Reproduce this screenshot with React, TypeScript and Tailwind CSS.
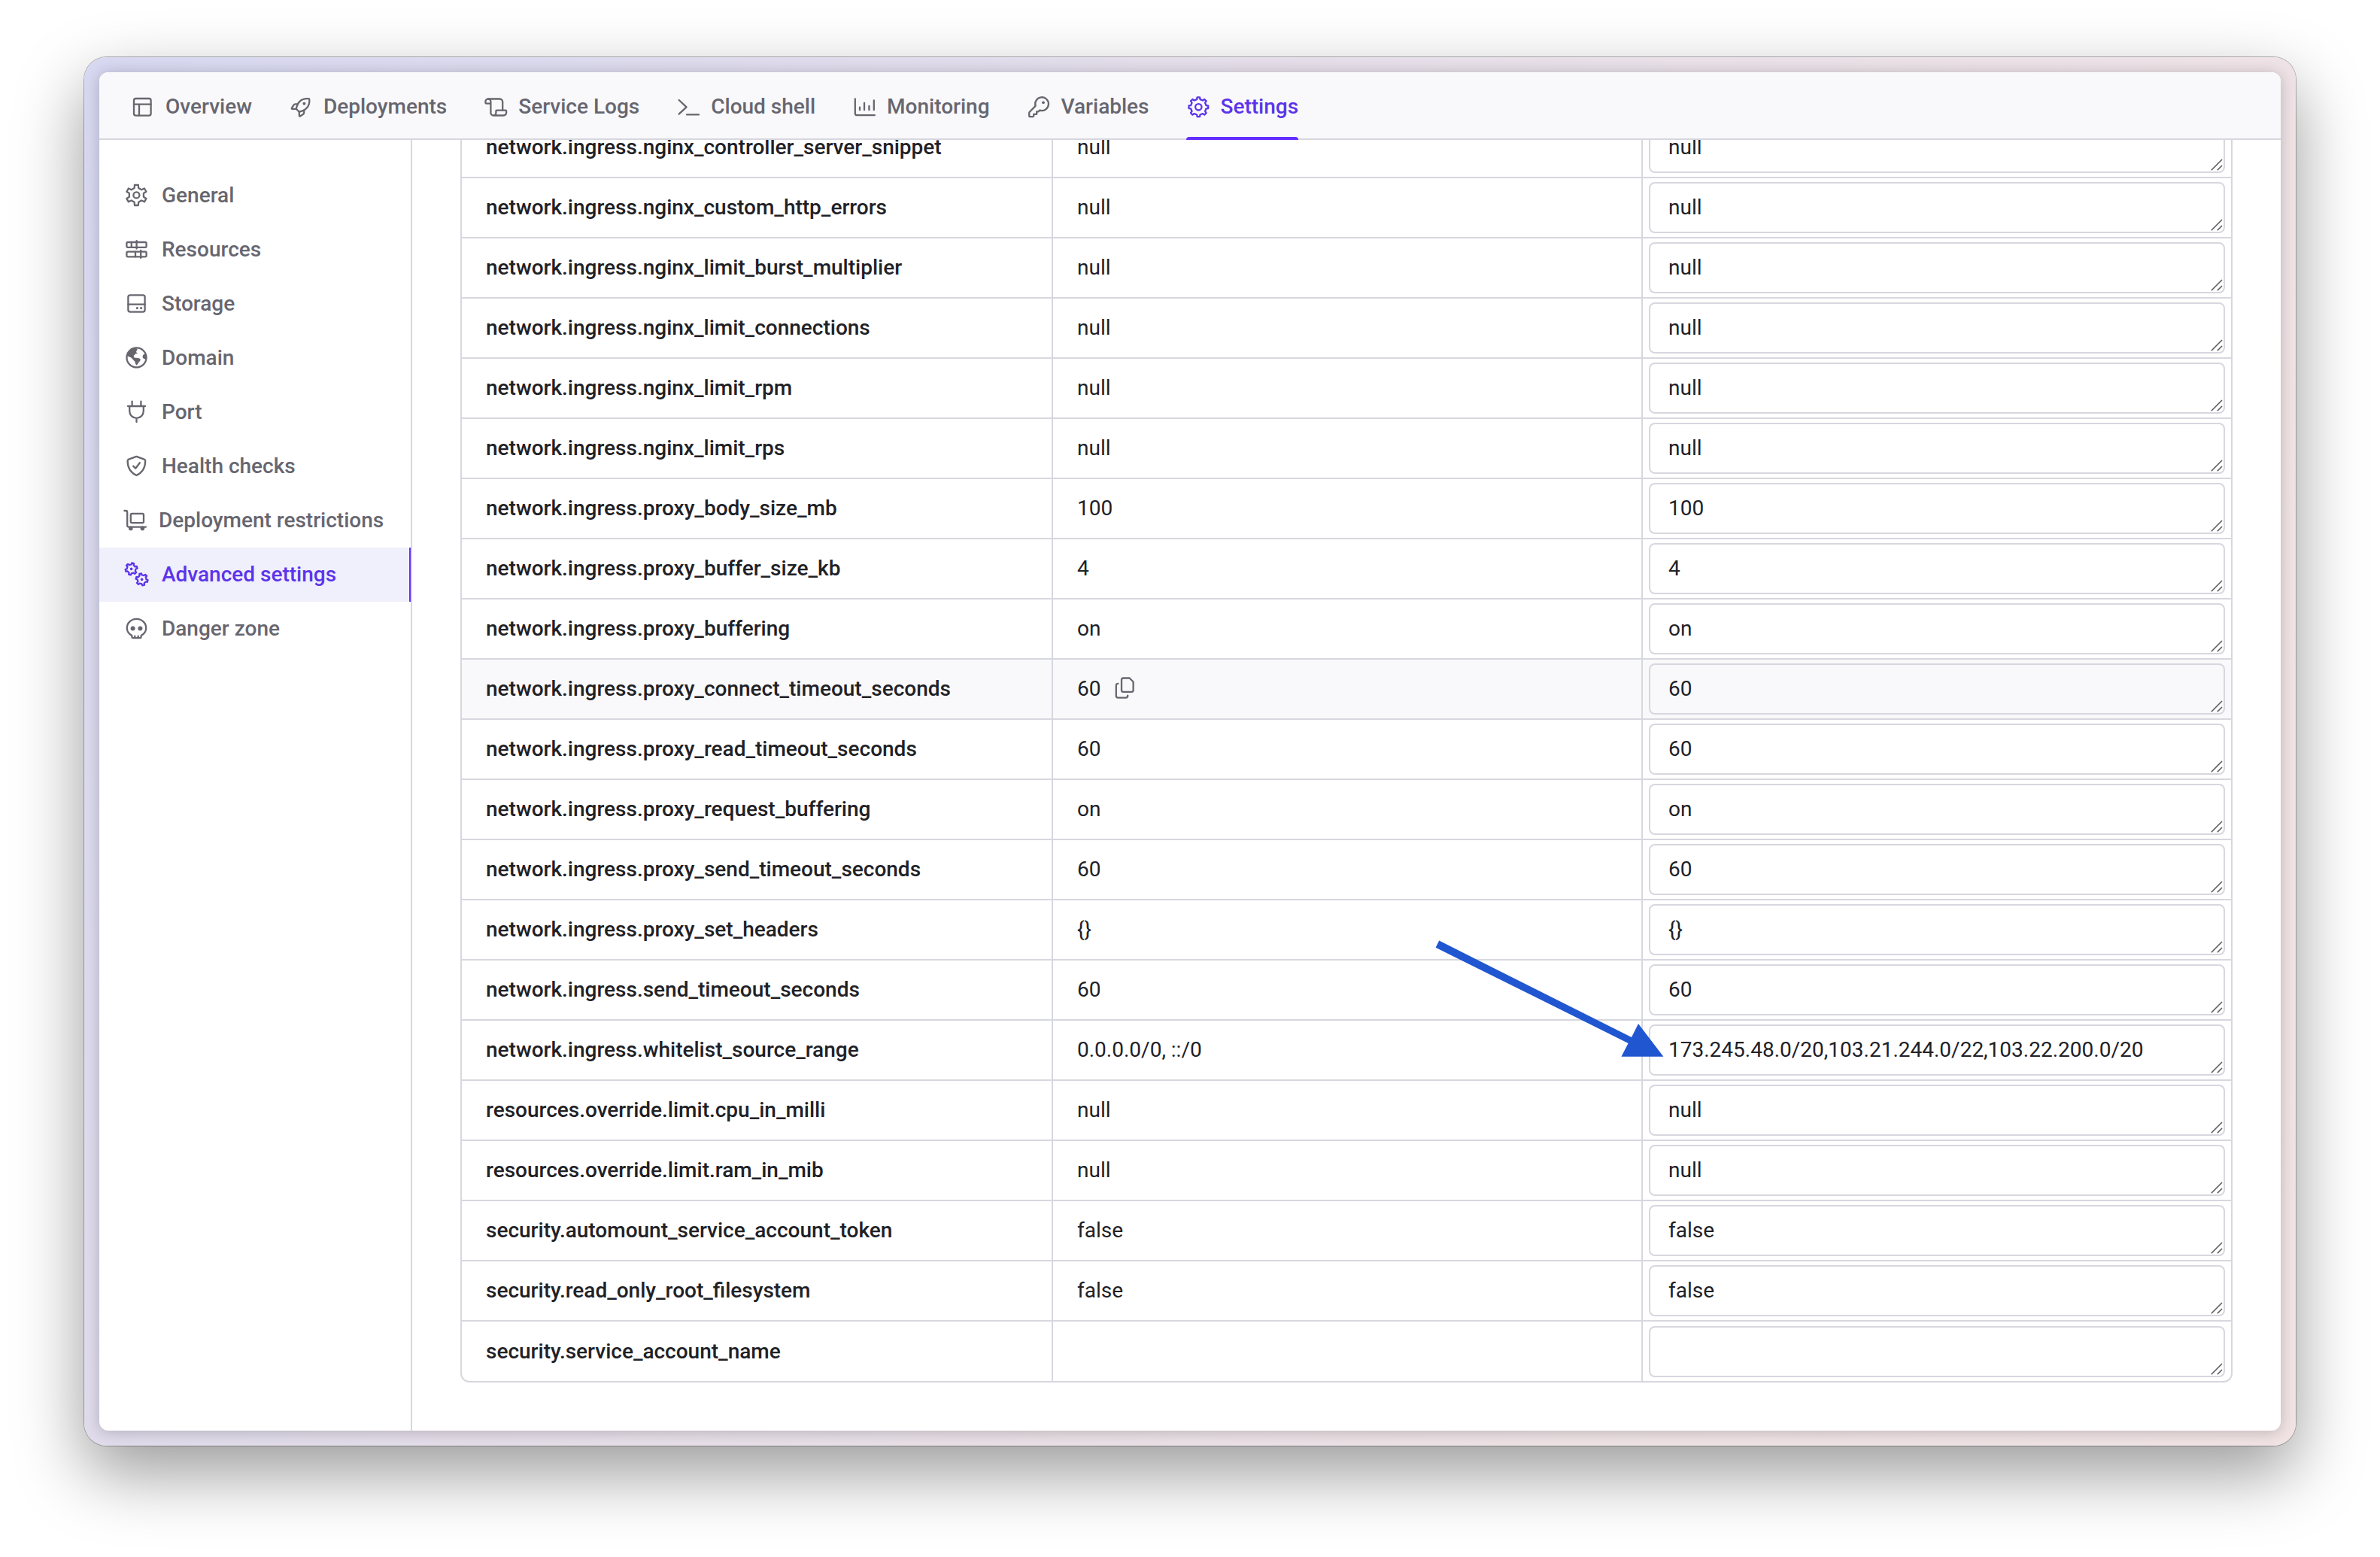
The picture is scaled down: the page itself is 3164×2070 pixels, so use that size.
import { memo, type ReactNode } from "react";
import clsx from "clsx";

/* ================= ICONS ================= */

// closed gear outline with flat teeth, the first tooth pointing at `turn` degrees
function gearPath(cx: number, cy: number, teeth: number, outer: number, inner: number, turn = -90) {
  const step = 360 / teeth;
  const points: string[] = [];
  for (let i = 0; i < teeth; i++) {
    const mid = turn + i * step;
    const corners = [
      [-0.27, inner],
      [-0.17, outer],
      [0.17, outer],
      [0.27, inner],
    ];
    for (const [offset, radius] of corners) {
      const angle = ((mid + offset * step) * Math.PI) / 180;
      points.push(`${(cx + radius * Math.cos(angle)).toFixed(2)} ${(cy + radius * Math.sin(angle)).toFixed(2)}`);
    }
  }
  return `M${points.join("L")}Z`;
}

function Icon({ children }: { children: ReactNode }) {
  return (
    <svg
      viewBox="0 0 32 32"
      className="size-8 shrink-0 overflow-visible"
      fill="none"
      stroke="currentColor"
      strokeWidth="2.3"
      strokeLinecap="round"
      strokeLinejoin="round"
      aria-hidden
    >
      {children}
    </svg>
  );
}

const LayoutIcon = () => (
  <Icon>
    <rect x="4" y="5" width="22.6" height="22.6" rx="2.6" />
    <path d="M4 12.6H26.6M11 12.6V27.6" />
  </Icon>
);

const RocketIcon = () => (
  <Icon>
    <path d="M9.8 18.7C11.4 10.6 16.4 4.4 26.2 5.2C27 5.2 27.3 5.6 27.3 6.3C28 15.8 21.8 21.2 13.8 22.7Z" />
    <path d="M11.8 12.4H8.8C7.7 12.4 7 12.8 6.4 13.7L3.9 17.6C3.5 18.3 3.8 18.8 4.6 18.8H9.8" />
    <path d="M20.2 20.6V23.5C20.2 24.7 19.8 25.4 18.8 26L15 28.5C14.3 28.9 13.8 28.6 13.8 27.8V22.7" />
    <circle cx="20.4" cy="11.8" r="2" fill="currentColor" stroke="none" />
  </Icon>
);

const ScrollIcon = () => (
  <Icon>
    <path d="M25.2 20.6V9.5A4 4 0 0 0 21.2 5.5H6" />
    <path d="M9.4 11.6H3.4A1 1 0 0 1 2.4 10.6V9.1A3.5 3.5 0 0 1 9.4 9.1V24A3.5 3.5 0 0 0 12.9 27.5A3.5 3.5 0 0 0 16.4 24V21.6A1 1 0 0 1 17.4 20.6H29.1A1 1 0 0 1 30.1 21.6V23.9A3.6 3.6 0 0 1 26.5 27.5H12.9" />
  </Icon>
);

const TerminalIcon = () => (
  <Icon>
    <path d="M3.6 7L13.6 16.3L3.6 25.6M14 26.4H30" />
  </Icon>
);

const ChartIcon = () => (
  <Icon>
    <path d="M3.8 5.4V24.4A2.8 2.8 0 0 0 6.6 27.2H29.8" />
    <path d="M10 16.6V20.2M16 11V20.2M22.4 15V20.2M28.8 7.4V20.2" />
  </Icon>
);

const KeyIcon = () => (
  <Icon>
    <path d="M11.6 14.9A8.9 8.9 0 1 1 17.2 20.6L15.6 22.3H13.2V25.8H9.2V28.2A1 1 0 0 1 8.2 29.2H4.2A1 1 0 0 1 3.2 28.2V24.2A2.2 2.2 0 0 1 3.8 22.7Z" />
    <circle cx="22" cy="10.3" r="1.9" fill="currentColor" stroke="none" />
  </Icon>
);

const CogIcon = () => (
  <Icon>
    <path d={gearPath(16.3, 16.3, 8, 13, 10.4)} />
    <circle cx="16.3" cy="16.3" r="4.2" />
  </Icon>
);

const GearIcon = () => (
  <Icon>
    <path d={gearPath(15.4, 15.4, 6, 13.8, 9.8)} />
    <circle cx="15.4" cy="15.4" r="4" />
  </Icon>
);

const ResourcesIcon = () => (
  <Icon>
    <rect x="2.4" y="6" width="26.2" height="6.8" rx="1.6" />
    <rect x="2.4" y="18.6" width="26.2" height="6.8" rx="1.6" />
    <path d="M8.8 6V12.8M15.6 4.2V14.6M14 18.6V25.4M21.2 16.8V27" />
  </Icon>
);

const DiskIcon = () => (
  <Icon>
    <rect x="4.4" y="4.4" width="22.2" height="22.2" rx="2.6" />
    <path d="M4.4 16.6H26.6" />
    <circle cx="16.4" cy="21.6" r="1.6" fill="currentColor" stroke="none" />
    <circle cx="21.6" cy="21.6" r="1.6" fill="currentColor" stroke="none" />
  </Icon>
);

const EarthIcon = () => (
  <Icon>
    <circle cx="15.5" cy="15.4" r="13" />
    <g fill="currentColor" stroke="none">
      <path d="M2.9 13.2C3.8 7.4 8.6 2.8 14.6 2.6L16.8 4.6L14.8 8L17 9.8L14 10.6L11.6 13.2L12.5 15.4L18.5 16.2C20.9 16.6 21.4 18.4 20 20L17.8 22.6C16.9 24.4 16.5 25.6 15.1 25.4C14 24 13.8 21.8 13.2 20.4C11 19 10.4 17 8.4 15.6Z" />
      <path d="M28.4 11C25.4 9.8 23.2 12 23.6 14.4C24.2 17 26.8 18 28.6 17Z" />
    </g>
  </Icon>
);

const PlugIcon = () => (
  <Icon>
    <path d="M9.6 1.6V8M21.4 1.6V8M4 8H27M6.2 8V14.6A9.3 9.3 0 0 0 24.8 14.6V8M15.5 24V29" />
  </Icon>
);

const ShieldIcon = () => (
  <Icon>
    <path d="M15.4 2.8L25.6 6.6C26.6 7 27.2 7.8 27.2 8.8C27.2 17.6 23.2 24.4 15.4 28C7.6 24.4 3.6 17.6 3.6 8.8C3.6 7.8 4.2 7 5.2 6.6Z" />
    <path d="M11.2 15.6L14.2 18.7L19.8 11.2" />
  </Icon>
);

const CartIcon = () => (
  <Icon>
    <path d="M1.4 3H3.2A2 2 0 0 1 5.2 5V22.6A2 2 0 0 0 7.2 24.6H30" />
    <rect x="9.8" y="6.8" width="17.2" height="12.4" rx="1.6" />
    <circle cx="9.8" cy="26.4" r="2.8" fill="currentColor" stroke="none" />
    <circle cx="25.4" cy="26.4" r="2.8" fill="currentColor" stroke="none" />
  </Icon>
);

const GearsIcon = () => (
  <Icon>
    <path d={gearPath(8.6, 8.4, 6, 8, 5.9, -75)} />
    <path d={gearPath(22.6, 22.4, 6, 8, 5.9, -105)} />
    <circle cx="8.6" cy="8.4" r="1.8" fill="currentColor" stroke="none" />
    <circle cx="22.6" cy="22.4" r="1.8" fill="currentColor" stroke="none" />
  </Icon>
);

const SkullIcon = () => (
  <Icon>
    <path d="M9.4 27V25C5.2 22.8 2.8 19.2 2.8 15C2.8 8.2 8.4 2.9 15.5 2.9S28.2 8.2 28.2 15C28.2 19.2 25.8 22.8 21.6 25V27A1.2 1.2 0 0 1 20.4 28.2H10.6A1.2 1.2 0 0 1 9.4 27Z" />
    <path d="M13.3 25.6V28M17.7 25.6V28" />
    <circle cx="10.6" cy="15.4" r="3" fill="currentColor" stroke="none" />
    <circle cx="20.4" cy="15.4" r="3" fill="currentColor" stroke="none" />
  </Icon>
);

const CopyIcon = () => (
  <Icon>
    <path d="M14.4 1.5H22.6L27.6 6.5V17.4A2.4 2.4 0 0 1 25.2 19.8H14.4A2.4 2.4 0 0 1 12 17.4V3.9A2.4 2.4 0 0 1 14.4 1.5Z" />
    <path d="M7.4 8.8A2.6 2.6 0 0 0 4.8 11.4V25A2.6 2.6 0 0 0 7.4 27.6H17.6A2.6 2.6 0 0 0 20.2 25V24.6" />
  </Icon>
);

/* ================= DATA ================= */

const TABS = [
  { label: "Overview", icon: LayoutIcon },
  { label: "Deployments", icon: RocketIcon },
  { label: "Service Logs", icon: ScrollIcon },
  { label: "Cloud shell", icon: TerminalIcon },
  { label: "Monitoring", icon: ChartIcon },
  { label: "Variables", icon: KeyIcon },
  { label: "Settings", icon: CogIcon, active: true },
];

const SECTIONS = [
  { label: "General", icon: GearIcon },
  { label: "Resources", icon: ResourcesIcon },
  { label: "Storage", icon: DiskIcon },
  { label: "Domain", icon: EarthIcon },
  { label: "Port", icon: PlugIcon },
  { label: "Health checks", icon: ShieldIcon },
  { label: "Deployment restrictions", icon: CartIcon, narrow: true },
  { label: "Advanced settings", icon: GearsIcon, active: true },
  { label: "Danger zone", icon: SkullIcon },
];

type Setting = {
  name: string;
  initial: string;
  value?: string;
  hovered?: boolean;
  pointed?: boolean;
};

const SETTINGS: Setting[] = [
  { name: "network.ingress.nginx_controller_server_snippet", initial: "null" },
  { name: "network.ingress.nginx_custom_http_errors", initial: "null" },
  { name: "network.ingress.nginx_limit_burst_multiplier", initial: "null" },
  { name: "network.ingress.nginx_limit_connections", initial: "null" },
  { name: "network.ingress.nginx_limit_rpm", initial: "null" },
  { name: "network.ingress.nginx_limit_rps", initial: "null" },
  { name: "network.ingress.proxy_body_size_mb", initial: "100" },
  { name: "network.ingress.proxy_buffer_size_kb", initial: "4" },
  { name: "network.ingress.proxy_buffering", initial: "on" },
  { name: "network.ingress.proxy_connect_timeout_seconds", initial: "60", hovered: true },
  { name: "network.ingress.proxy_read_timeout_seconds", initial: "60" },
  { name: "network.ingress.proxy_request_buffering", initial: "on" },
  { name: "network.ingress.proxy_send_timeout_seconds", initial: "60" },
  { name: "network.ingress.proxy_set_headers", initial: "{}" },
  { name: "network.ingress.send_timeout_seconds", initial: "60" },
  {
    name: "network.ingress.whitelist_source_range",
    initial: "0.0.0.0/0, ::/0",
    value: "173.245.48.0/20,103.21.244.0/22,103.22.200.0/20",
    pointed: true,
  },
  { name: "resources.override.limit.cpu_in_milli", initial: "null" },
  { name: "resources.override.limit.ram_in_mib", initial: "null" },
  { name: "security.automount_service_account_token", initial: "false" },
  { name: "security.read_only_root_filesystem", initial: "false" },
  { name: "security.service_account_name", initial: "" },
];

/* ================= TABLE ROW ================= */

const SettingRow = memo(function SettingRow({ name, initial, value = initial, hovered, pointed }: Setting) {
  return (
    <tr className={clsx("group", hovered && "bg-[#f9f9fb]")}>
      <th
        scope="row"
        className="border-b-2 border-[#d7d7df] pl-8 text-left font-medium group-last:border-b-0"
      >
        {name}
      </th>
      <td className="border-b-2 border-l-2 border-[#d7d7df] pl-8 group-last:border-b-0">
        <div className="flex items-center gap-4">
          {initial}
          {hovered && (
            <button type="button" aria-label={`Copy ${name}`} className="text-[#67666f]">
              <CopyIcon />
            </button>
          )}
        </div>
      </td>
      <td className="border-b-2 border-l-2 border-[#d7d7df] px-2 py-[5px] group-last:border-b-0 group-last:pt-1.5">
        <div className="relative">
          <textarea
            aria-label={name}
            rows={1}
            defaultValue={value}
            className="block w-full resize-none overflow-hidden rounded-lg border-2 border-[#d7d7df] bg-transparent px-6 py-3 outline-none focus:border-[#5b34ea]"
          />
          <svg
            viewBox="0 0 16 16"
            className="pointer-events-none absolute right-[3px] bottom-[3px] size-4"
            stroke="#5c5c5f"
            strokeWidth="1.6"
            aria-hidden
          >
            <path d="M.8 15.2L15 1M8.8 15.2L15 9" />
          </svg>
          {pointed && (
            <svg
              viewBox="0 0 304 156"
              className="pointer-events-none absolute -top-28 -left-[284px] z-10 h-[156px] w-[304px] max-w-none"
              fill="#2156d1"
              aria-hidden
            >
              <path d="M5.2 .6L261 129L270 111L303.4 154.8L247.4 154.8L256.6 137L.6 9.8Z" />
            </svg>
          )}
        </div>
      </td>
    </tr>
  );
});

/* ================= PAGE ================= */

export default function App() {
  return (
    <div className="bg-white px-28 pt-19 pb-37 font-['Roboto',sans-serif] text-[28px]/10 text-[#212126]">
      <div className="rounded-[30px] bg-linear-[120deg,#d7d8f1,#e7dfe9_45%,#efe3e6_75%,#f2e4e5] p-5 shadow-[0_0_0_1px_rgba(0,0,0,0.28),0_36px_90px_rgba(0,0,0,0.4)]">
        <div className="overflow-hidden rounded-xl bg-white shadow-[0_2px_20px_rgba(0,0,0,0.22)]">
          <nav
            aria-label="Service"
            className="flex gap-[49px] border-b-2 border-[#d7d7df] bg-[#f9f9fb] pl-[42px] font-medium text-[#67666f]"
          >
            {TABS.map(({ label, icon: TabIcon, active }) => (
              <a
                key={label}
                href="#"
                aria-current={active ? "page" : undefined}
                className={clsx(
                  "relative -mb-0.5 flex items-center gap-3.5 pt-[26px] pb-6",
                  active &&
                    "text-[#5b34ea] after:absolute after:inset-x-0 after:bottom-0 after:h-1 after:rounded-t-sm after:bg-[#642dff]"
                )}
              >
                <TabIcon />
                {label}
              </a>
            ))}
          </nav>

          <div className="flex">
            <aside className="w-[416px] shrink-0 border-r-2 border-[#d7d7df] pt-[38px]">
              <nav aria-label="Settings" className="flex flex-col font-medium text-[#67666f]">
                {SECTIONS.map(({ label, icon: SectionIcon, active, narrow }) => (
                  <a
                    key={label}
                    href="#"
                    aria-current={active ? "page" : undefined}
                    className={clsx(
                      "flex items-center gap-[17px] py-4 pl-[34px] whitespace-nowrap",
                      active && "border-r-2 border-[#642dff] bg-[#f0effc] text-[#5b34ea]"
                    )}
                  >
                    <span className={clsx("flex justify-center", narrow ? "w-7" : "w-8")}>
                      <SectionIcon />
                    </span>
                    {label}
                  </a>
                ))}
              </nav>
            </aside>

            <main className="min-w-0 flex-1 overflow-hidden px-16 pb-16">
              {/* the list is scrolled, its first visible row sits partly under the tabs */}
              <div className="-mt-[29px] rounded-b-xl border-2 border-t-0 border-[#d7d7df]">
                <table className="w-full table-fixed border-separate border-spacing-0">
                  <tbody>
                    {SETTINGS.map((setting) => (
                      <SettingRow key={setting.name} {...setting} />
                    ))}
                  </tbody>
                </table>
              </div>
            </main>
          </div>
        </div>
      </div>
    </div>
  );
}
